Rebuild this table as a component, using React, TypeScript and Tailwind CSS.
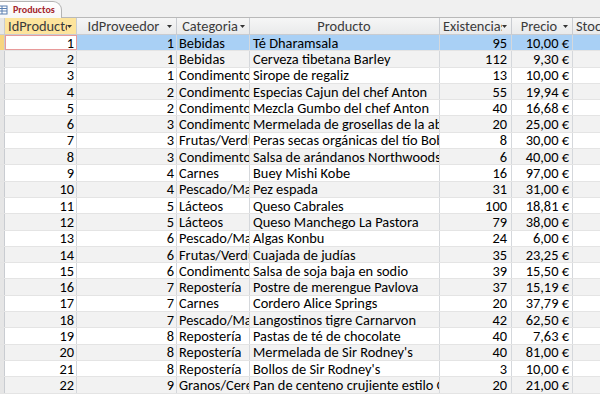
const rows: [number, number, string, string, number, string][] = [
  [1, 1, "Bebidas", "Té Dharamsala", 95, "10,00 €"],
  [2, 1, "Bebidas", "Cerveza tibetana Barley", 112, "9,30 €"],
  [3, 1, "Condimentos", "Sirope de regaliz", 13, "10,00 €"],
  [4, 2, "Condimentos", "Especias Cajun del chef Anton", 55, "19,94 €"],
  [5, 2, "Condimentos", "Mezcla Gumbo del chef Anton", 40, "16,68 €"],
  [6, 3, "Condimentos", "Mermelada de grosellas de la abuela", 20, "25,00 €"],
  [7, 3, "Frutas/Verduras", "Peras secas orgánicas del tío Bob", 8, "30,00 €"],
  [8, 3, "Condimentos", "Salsa de arándanos Northwoods", 6, "40,00 €"],
  [9, 4, "Carnes", "Buey Mishi Kobe", 16, "97,00 €"],
  [10, 4, "Pescado/Marisco", "Pez espada", 31, "31,00 €"],
  [11, 5, "Lácteos", "Queso Cabrales", 100, "18,81 €"],
  [12, 5, "Lácteos", "Queso Manchego La Pastora", 79, "38,00 €"],
  [13, 6, "Pescado/Marisco", "Algas Konbu", 24, "6,00 €"],
  [14, 6, "Frutas/Verduras", "Cuajada de judías", 35, "23,25 €"],
  [15, 6, "Condimentos", "Salsa de soja baja en sodio", 39, "15,50 €"],
  [16, 7, "Repostería", "Postre de merengue Pavlova", 37, "15,19 €"],
  [17, 7, "Carnes", "Cordero Alice Springs", 20, "37,79 €"],
  [18, 7, "Pescado/Marisco", "Langostinos tigre Carnarvon", 42, "62,50 €"],
  [19, 8, "Repostería", "Pastas de té de chocolate", 40, "7,63 €"],
  [20, 8, "Repostería", "Mermelada de Sir Rodney's", 40, "81,00 €"],
  [21, 8, "Repostería", "Bollos de Sir Rodney's", 3, "10,00 €"],
  [22, 9, "Granos/Cereales", "Pan de centeno crujiente estilo Gustaf", 20, "21,00 €"],
];

function Arrow() {
  return (
    <svg width="5" height="3" viewBox="0 0 5 3" className="shrink-0">
      <path d="M0 0h5L2.5 3z" fill="#333" />
    </svg>
  );
}

function Head({ label, w, active, arrow = true, align = "center" }: { label: string; w: string; active?: boolean; arrow?: boolean; align?: "center" | "left" }) {
  return (
    <div
      className={`${w} shrink-0 h-full flex items-center pl-[3px] pr-[4px] border-r border-[#c9ccd1] overflow-hidden whitespace-nowrap ${
        active ? "bg-[#fde49c]" : "bg-gradient-to-b from-[#f6f6f6] to-[#e9eaeb]"
      }`}
    >
      <span className={`flex-1 overflow-hidden ${align === "center" ? "text-center" : "text-left"}`}>{label}</span>
      {arrow && <Arrow />}
    </div>
  );
}

export default function App() {
  return (
    <div
      className="w-[600px] h-[394px] overflow-hidden bg-white text-[14.4px] text-black leading-[14px]"
      style={{ fontFamily: "Carlito, Calibri, Lato, 'Liberation Sans', sans-serif" }}
    >
      {/* tab strip */}
      <div className="h-[18px] bg-[#f0f0f0] border-b border-[#b9b9b9] flex items-end">
        <div className="h-[17px] w-[62px] -mb-px bg-gradient-to-b from-white to-[#f7f7f7] border-t border-r border-[#b4b4b4] rounded-tr-[9px] flex items-center gap-[5px]">
          <svg width="8" height="10" viewBox="0 0 8 10" className="shrink-0">
            <rect x="-3" y="1" width="10" height="8" fill="#fff" stroke="#5b7fb0" />
            <path d="M-3 3.5h10M-3 6h10M2 1v8" stroke="#5b7fb0" />
          </svg>
          <span className="text-[10px] font-bold text-[#a4262c]">Productos</span>
        </div>
      </div>

      {/* header */}
      <div className="h-[17px] flex border-b border-[#c9ccd1] text-[#3b3b3b]">
        <div className="w-[5px] shrink-0 h-full bg-[#e6e6e6] border-r border-[#c9ccd1]" />
        <Head label="IdProducto" w="w-[72px]" active align="left" />
        <Head label="IdProveedor" w="w-[100px]" />
        <Head label="Categoria" w="w-[73px]" />
        <Head label="Producto" w="w-[190px]" arrow={false} />
        <Head label="Existencias" w="w-[72px]" />
        <Head label="Precio" w="w-[61px]" />
        <Head label="Stock" w="w-[60px]" align="left" />
      </div>

      {/* rows */}
      {rows.map(([id, prov, cat, prod, ex, price], i) => {
        const sel = i === 0;
        const bg = sel ? "bg-[#a9d0f5]" : i % 2 === 1 ? "bg-[#f2f2f2]" : "bg-white";
        const cell = "shrink-0 h-full flex items-center overflow-hidden whitespace-nowrap border-r border-[#d5d8dc]";
        return (
          <div key={id} className={`h-[16.3px] flex border-b border-[#e4e4e4] ${bg}`}>
            <div className={`w-[5px] shrink-0 h-full border-r border-[#c9ccd1] ${sel ? "bg-[#f7d580]" : "bg-[#e6e6e6]"}`} />
            <div className={`${cell} w-[72px] justify-end pr-[2px] ${sel ? "bg-white outline outline-1 -outline-offset-1 outline-[#e89a9a]" : ""}`}>{id}</div>
            <div className={`${cell} w-[100px] justify-end pr-[2px]`}>{prov}</div>
            <div className={`${cell} w-[73px] pl-[2px]`}>{cat}</div>
            <div className={`${cell} w-[190px] pl-[3px]`}>{prod}</div>
            <div className={`${cell} w-[72px] justify-end pr-[4px]`}>{ex}</div>
            <div className={`${cell} w-[61px] justify-end pr-[3px]`}>{price}</div>
            <div className={`${cell} w-[60px]`} />
          </div>
        );
      })}
    </div>
  );
}
